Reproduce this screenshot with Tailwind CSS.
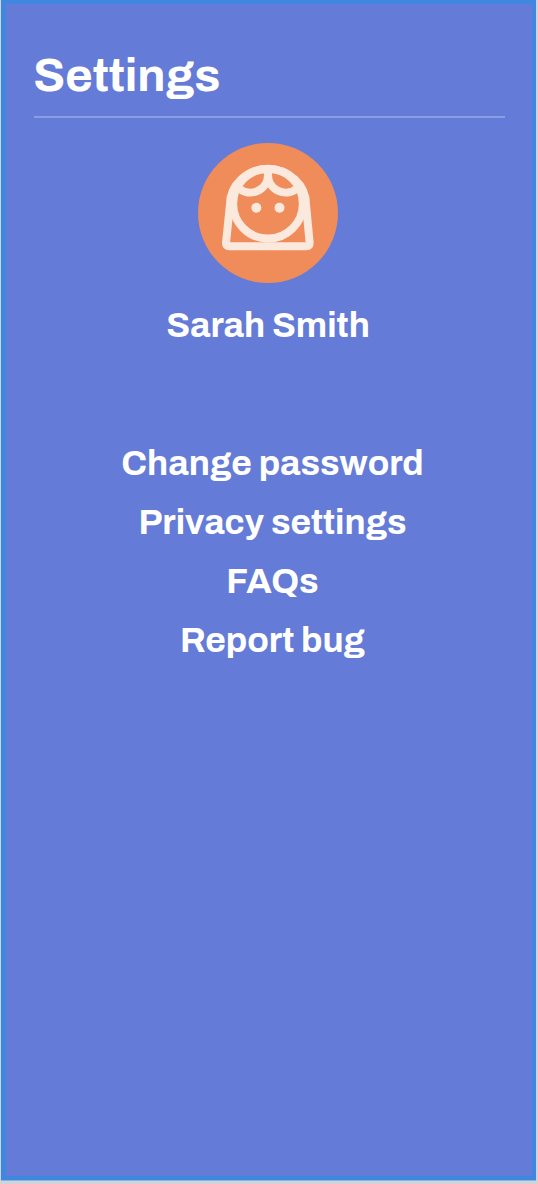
<!DOCTYPE html>
<html lang="en">
<head>
<meta charset="utf-8">
<title>Settings</title>
<script src="https://cdn.jsdelivr.net/npm/@tailwindcss/browser@4"></script>
</head>
<body class="w-[538px] h-[1184px] overflow-hidden bg-[#d1d3d6] pl-px pr-[2px] font-['Archivo','Liberation_Sans',sans-serif] font-bold text-white">
<div class="h-[1181px] border-b border-[#84b5e8]">
<main class="h-[1180px] border-l-[5px] border-r-4 border-y-4 border-[#4087e0] bg-[#647bd7] pl-[28px] flex flex-col items-start">
  <header class="w-[471px] h-[114px] shrink-0 border-b-2 border-[#8b9ce2] pt-[44px]">
    <h1 class="-ml-[0.7px] text-[47px] leading-[56px]">Settings</h1>
  </header>
  <section class="w-[468px] flex flex-col items-center">
    <svg class="mt-[25px] w-[140px] h-[140px] shrink-0" viewBox="24 24 420 420" fill="none" stroke="#fbe9de" stroke-width="24">
      <circle cx="234" cy="234" r="210" fill="#f08c59" stroke="none"/>
      <path stroke-linejoin="round" d="M120 208A114 106 0 0 1 348 208L359 324Q359 334 349 334H118Q108 334 108 324Z"/>
      <circle cx="234" cy="206" r="104.500"/>
      <path d="M234 104V120A53 53 0 0 1 147 160.500M234 120A53 53 0 0 0 321 160.500"/>
      <g fill="#fbe9de" stroke="none"><circle cx="199" cy="218.500" r="15"/><circle cx="268.500" cy="218.500" r="15"/></g>
    </svg>
    <h2 class="mt-[20px] text-[35.2px] leading-[44px]">Sarah Smith</h2>
    <nav class="mt-[87px] ml-[9px] flex flex-col items-center text-[35.2px] leading-[59px]">
      <a>Change password</a>
      <a>Privacy settings</a>
      <a>FAQs</a>
      <a>Report bug</a>
    </nav>
  </section>
</main>
</div>
</body>
</html>
